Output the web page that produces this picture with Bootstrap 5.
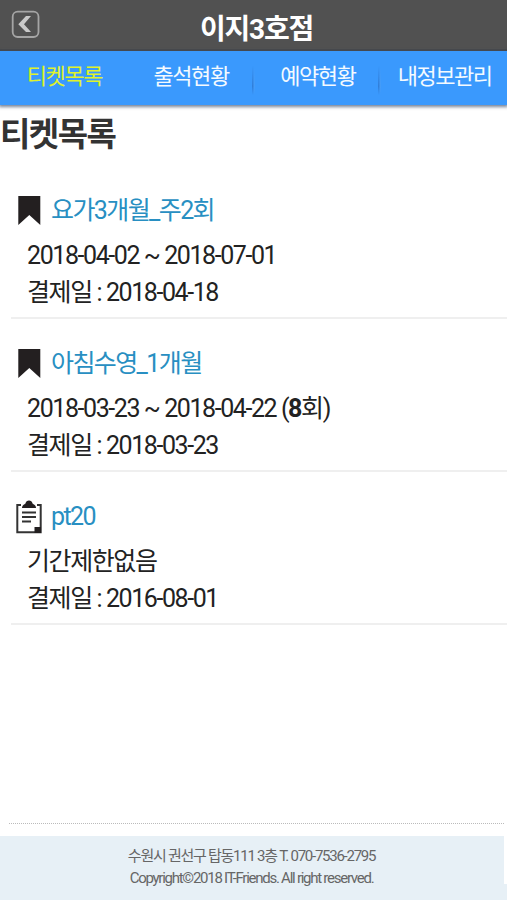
<!DOCTYPE html>
<html lang="ko">
<head>
<meta charset="utf-8">
<meta name="viewport" content="width=device-width, initial-scale=1">
<title>이지3호점</title>
<link href="https://cdn.jsdelivr.net/npm/bootstrap@5.3.0/dist/css/bootstrap.min.css" rel="stylesheet">
<style>
body{font-family:Roboto,"Noto Sans CJK KR",sans-serif;font-size:25px;letter-spacing:-1.42px;color:#222;height:900px;overflow:hidden}
.top-bar{height:51px;background:#515151;border-bottom:2px solid #484848}
.top-bar .back{width:36px;height:50px;padding:10px 0 0 11px;line-height:0}
.shop-name{font-size:28px;font-weight:700;letter-spacing:-1.2px;line-height:40px;padding-top:10px;padding-left:6px}
.tabs{height:54px;background:#3a99fd;box-shadow:0 1px 3px 1px rgba(60,80,110,.7)}
.tabs a{font-size:22px;letter-spacing:-1.45px;line-height:32px;padding-top:10px;padding-left:2px;color:#f4faff}
.tabs a.active{color:#dff22c}
.tabs .bar::before{content:"";position:absolute;left:-2px;top:15px;width:3px;height:29px;background:linear-gradient(90deg,#2b76d0,#4aa3ff);-webkit-mask-image:linear-gradient(transparent,#000 70%,transparent)}
.page-title{font-size:33px;font-weight:700;letter-spacing:-1.5px;line-height:48px;color:#333;padding:6px 0 0 0;height:74px}
.ticket{height:153px;margin-left:11px;border-bottom:2px solid #efefef;padding:27px 0 0 4px}
.ticket-first{height:140px;padding-top:14px}
.ticket-name{height:36px;line-height:36px;letter-spacing:-1.6px;color:#288fc2}
.ticket-name svg{width:28px;height:36px;margin-right:8px;flex:none}
.ticket-info{line-height:37px;padding:8px 0 0 12px}
.foot-rule{border-top:1px dotted #bbb;margin:0 3px 0 9px;height:13px}
.foot{height:64px;background:#e7f0f6;font-size:15px;letter-spacing:-1.26px;line-height:22px;color:#666;padding-top:9px;padding-right:4px}
.foot-edge{width:3px;height:48px;right:0;top:0}
</style>
</head>
<body class="d-flex flex-column bg-white">
<header class="top-bar position-relative text-white text-center flex-shrink-0">
  <a class="back position-absolute start-0 top-0" href="#" aria-label="뒤로">
    <svg width="29" height="29" viewBox="0 0 29 29" fill="none"><rect x="1.7" y="1.7" width="25.8" height="25.3" rx="5" stroke="#a5a5a5" stroke-width="1.8"/><path d="M20 6h-5L7.3 14.2 15 22h5l-7-7.8z" fill="#c9c9c9"/></svg>
  </a>
  <h1 class="shop-name m-0">이지3호점</h1>
</header>
<nav class="tabs row g-0 flex-shrink-0 text-center position-relative">
  <a class="col active text-decoration-none" href="#">티켓목록</a>
  <a class="col text-decoration-none" href="#">출석현황</a>
  <a class="col text-decoration-none position-relative bar" href="#">예약현황</a>
  <a class="col text-decoration-none position-relative bar" href="#">내정보관리</a>
</nav>
<main class="flex-grow-1">
  <h2 class="page-title m-0">티켓목록</h2>
  <section class="ticket ticket-first">
    <div class="ticket-name d-flex"><svg viewBox="0 0 28 36"><path d="M3.3 3H25.3V32L14.3 22 3.3 32z" fill="#231f20"/></svg><span>요가3개월_주2회</span></div>
    <div class="ticket-info">2018-04-02 ~ 2018-07-01<br>결제일 : 2018-04-18</div>
  </section>
  <section class="ticket">
    <div class="ticket-name d-flex"><svg viewBox="0 0 28 36"><path d="M3.3 3H25.3V32L14.3 22 3.3 32z" fill="#231f20"/></svg><span>아침수영_1개월</span></div>
    <div class="ticket-info">2018-03-23 ~ 2018-04-22 (<b>8</b>회)<br>결제일 : 2018-03-23</div>
  </section>
  <section class="ticket">
    <div class="ticket-name d-flex"><svg viewBox="0 0 28 36"><g transform="translate(0 1)"><path d="M6 5H2.3V32.3H25.7V5H22" fill="none" stroke="#333" stroke-width="2"/><path d="M7 8C7 5 9.5 4.500 10.5 3.500c.4-4 6.600-4 7 0 1 1 3.500 1.500 3.500 4.500zM19.500 33v-6h6.500V33z" fill="#231f20"/><path d="M7 12.500h14M7 17h14M7 21.500h9" stroke="#333" stroke-width="1.8"/></g></svg><span>pt20</span></div>
    <div class="ticket-info">기간제한없음<br>결제일 : 2016-08-01</div>
  </section>
</main>
<div class="foot-rule flex-shrink-0"></div>
<footer class="foot position-relative text-center flex-shrink-0">
  <div class="foot-edge position-absolute bg-white"></div>
  <div>수원시 권선구 탑동111 3층 T. 070-7536-2795</div>
  <div>Copyright©2018 IT-Friends. All right reserved.</div>
</footer>
<script src="https://cdn.jsdelivr.net/npm/bootstrap@5.3.0/dist/js/bootstrap.bundle.min.js"></script>
</body>
</html>
